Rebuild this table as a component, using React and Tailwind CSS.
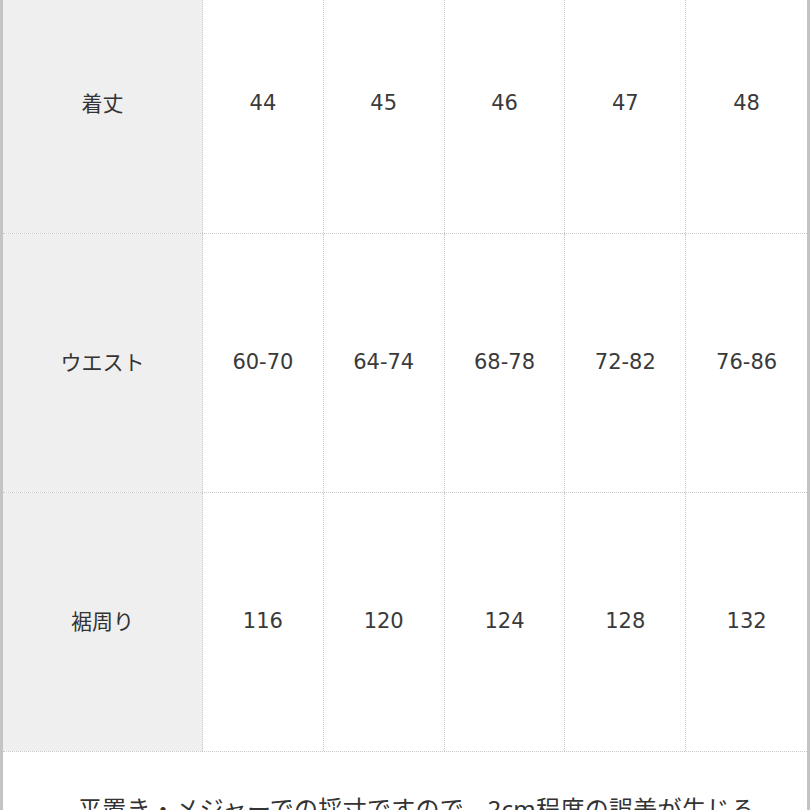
const ROWS = [
  { label: '着丈', values: ['44', '45', '46', '47', '48'] },
  { label: 'ウエスト', values: ['60-70', '64-74', '68-78', '72-82', '76-86'] },
  { label: '裾周り', values: ['116', '120', '124', '128', '132'] },
];

const FONT = { fontFamily: '"Noto Sans", "Noto Sans CJK JP", sans-serif' };
const NUM_FONT = { fontFamily: '"DejaVu Sans", "Noto Sans CJK JP", sans-serif' };

export default function App() {
  return (
    <div
      className="w-[810px] h-[810px] overflow-hidden bg-white border-x-[3px] border-[#c4c4c4] text-[#333]"
      style={FONT}
    >
      <div className="-mt-[25px]">
        {ROWS.map((row) => (
          <div
            key={row.label}
            className="grid grid-cols-[200px_repeat(5,1fr)] h-[259px] border-b border-dotted border-[#c8c8c8]"
          >
            <div className="flex items-center justify-center bg-[#efefef] border-r border-dotted border-[#c8c8c8] text-[21px]">
              {row.label}
            </div>
            {row.values.map((v, i) => (
              <div
                key={i}
                style={NUM_FONT}
                className={`flex items-center justify-center text-[21px] text-[#3a3a3a] ${
                  i < 4 ? 'border-r border-dotted border-[#c8c8c8]' : ''
                }`}
              >
                {v}
              </div>
            ))}
          </div>
        ))}
      </div>
      <div className="pt-[39px] pl-[75px] text-[24px] leading-[1.5] tracking-[0.3px] whitespace-nowrap">
        平置き・メジャーでの採寸ですので、2cm程度の誤差が生じる
      </div>
    </div>
  );
}
